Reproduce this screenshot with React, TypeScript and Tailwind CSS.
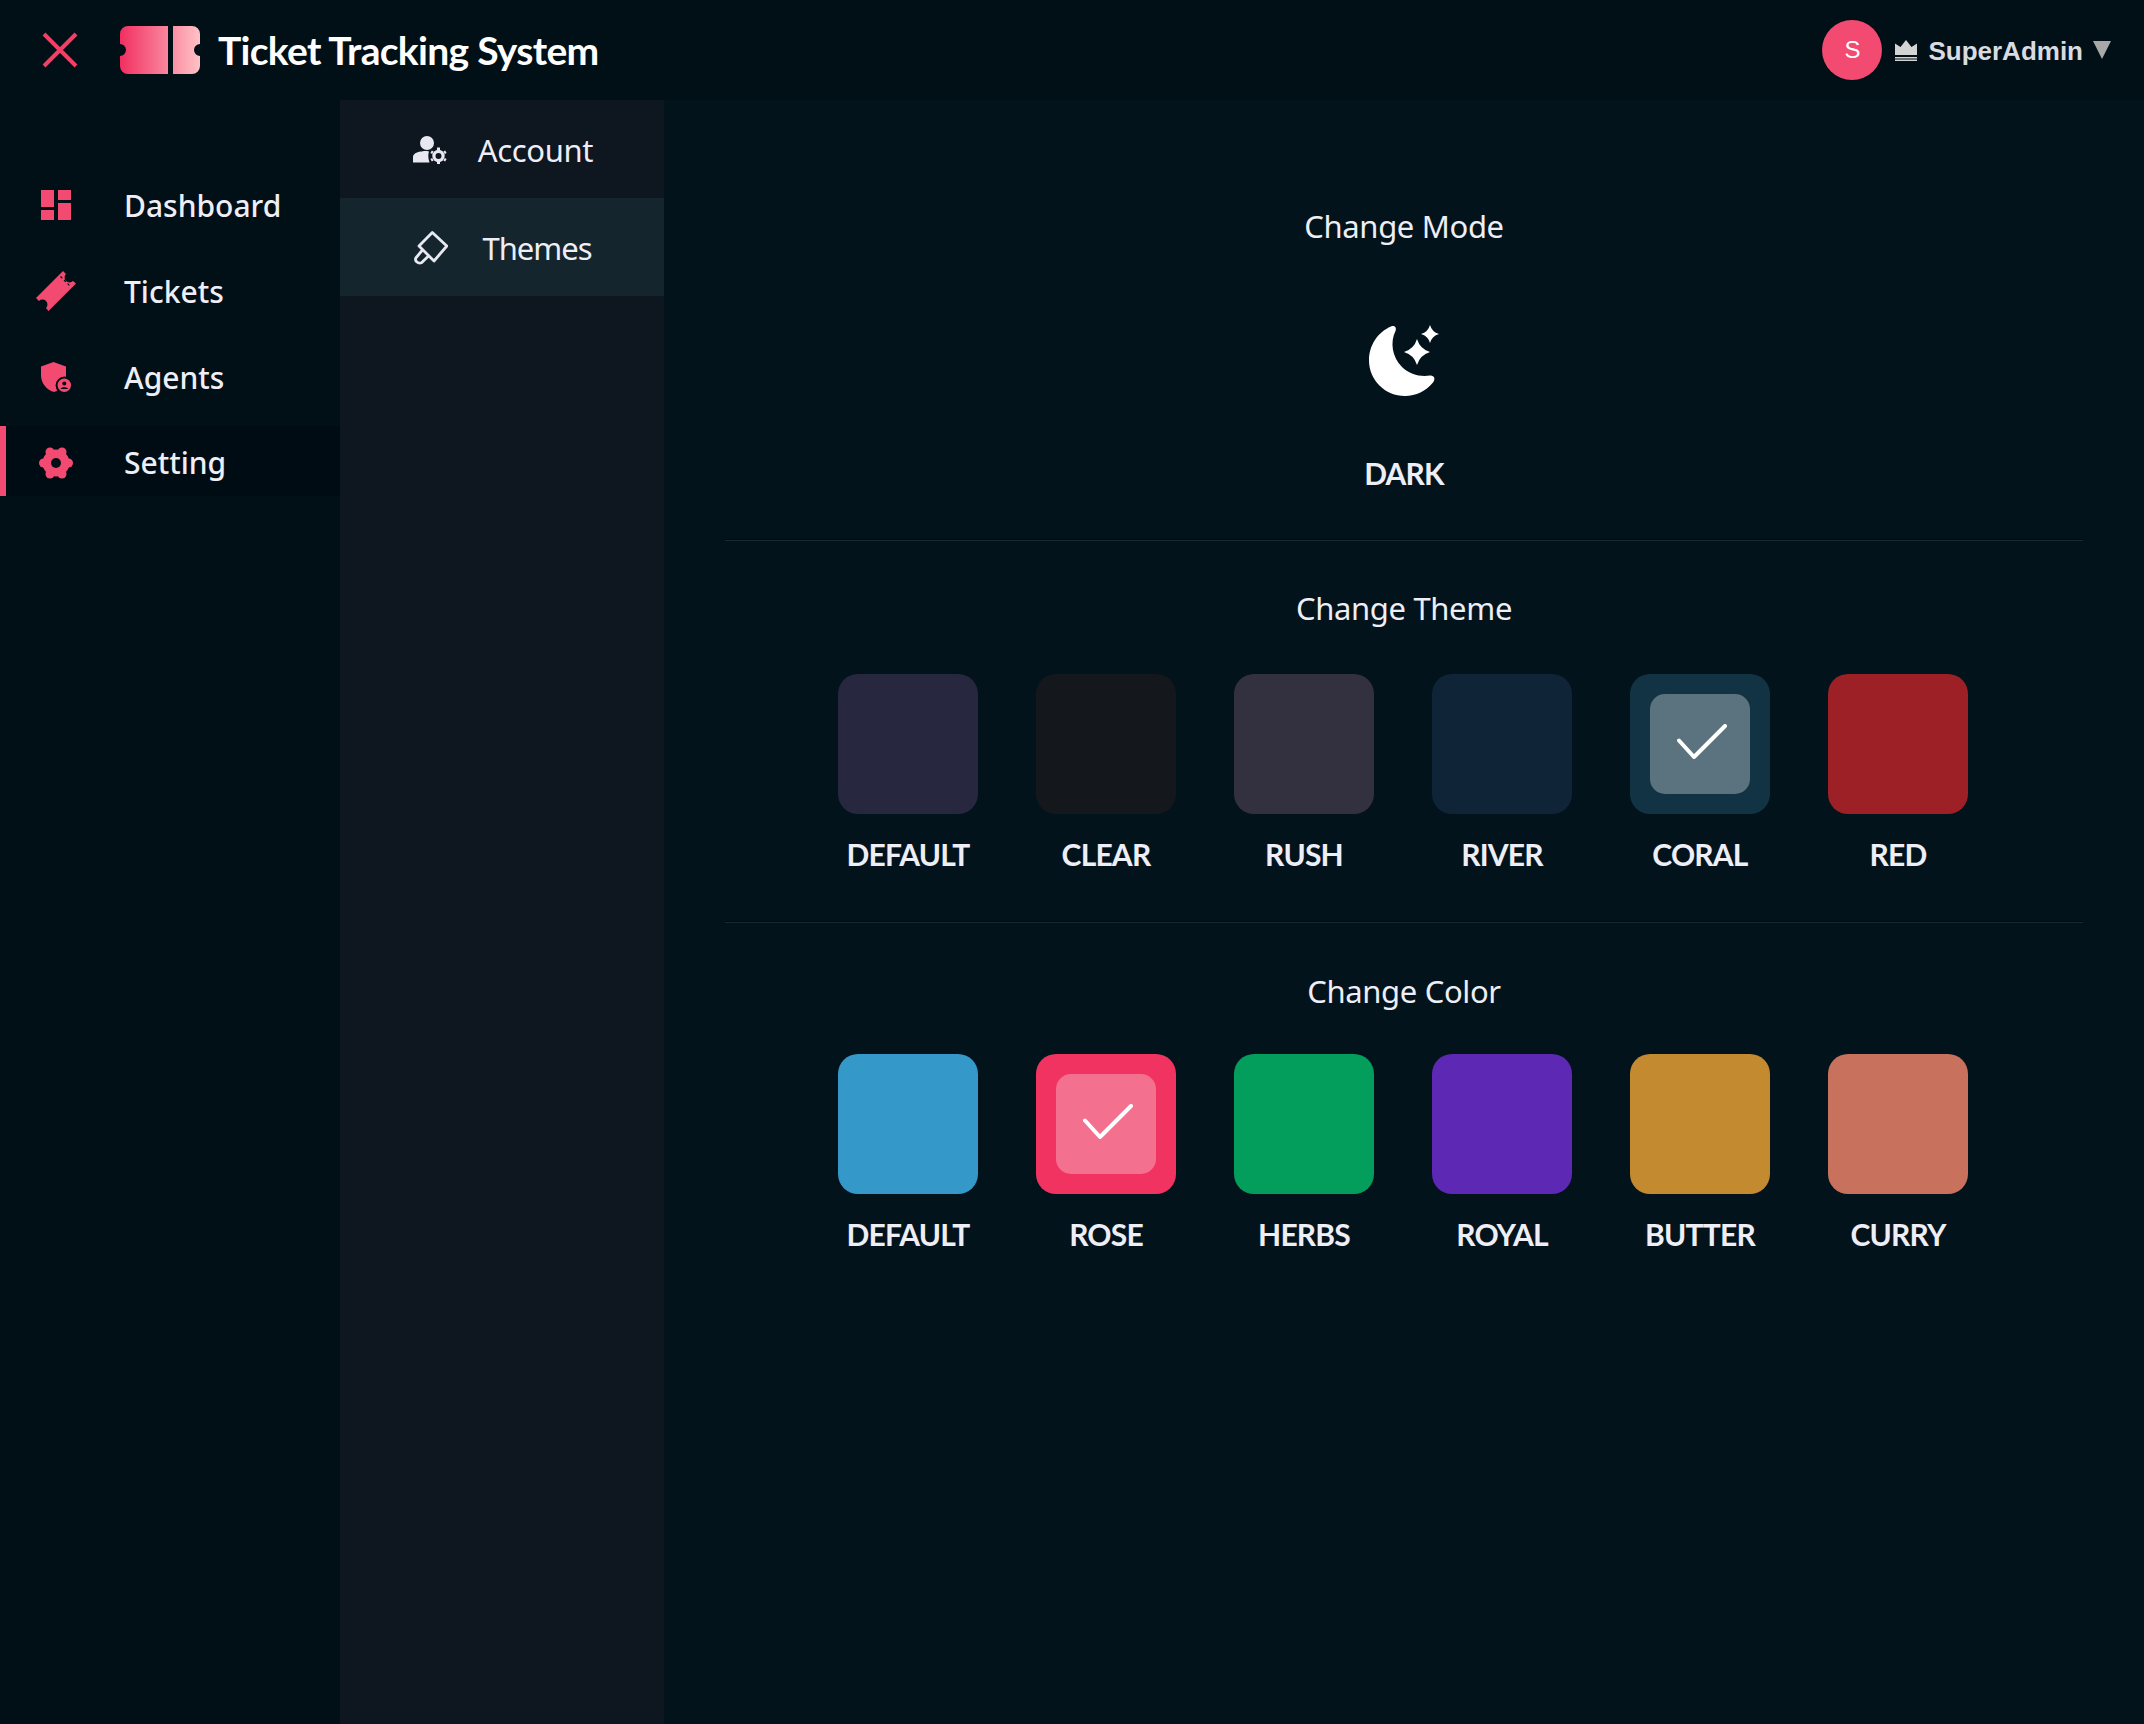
import { ReactNode } from 'react'

const PINK = '#f34a72'

const DashboardIcon = () => (
  <svg width="30" height="30" viewBox="0 0 30 30" fill={PINK}>
    <rect x="0" y="0" width="13" height="17" />
    <rect x="17" y="0" width="13" height="10" />
    <rect x="17" y="13" width="13" height="17" />
    <rect x="0" y="20" width="13" height="10" />
  </svg>
)

const TicketIcon = () => (
  <svg width="40" height="40" viewBox="0 0 40 40" fill={PINK}>
    <path d="M27 0 L30 3 A3.5 3.5 0 0 0 37 10 L40 12.5 L12.5 40 L10 37 A3.5 3.5 0 0 0 3 30 L0 27 Z" />
    <path d="M24.5 5.5 L34.5 15.5" stroke="#010f17" strokeWidth="1.2" strokeDasharray="2.5 2.5" fill="none" />
  </svg>
)

const AgentIcon = () => (
  <svg width="30" height="30" viewBox="0 0 30 30" fill={PINK}>
    <path d="M12.5 0 L25 4.5 V14 C25 22 20 27.5 13 30 C5 27.5 0 21 0 13 V4.5 Z" />
    <circle cx="23.3" cy="23.3" r="8.7" fill="#010f17" />
    <circle cx="23.3" cy="23.3" r="6.7" />
    <circle cx="23.3" cy="21.5" r="2" fill="#010f17" />
    <path d="M19.5 27 C20 24.6 26.6 24.6 27.1 27 Z" fill="#010f17" />
  </svg>
)

const GearIcon = () => (
  <svg width="34" height="32" viewBox="0 0 34 32" fill={PINK}>
    <circle cx="17" cy="16" r="13.5" />
    <circle cx="4.5" cy="16" r="4.5" />
    <circle cx="29.5" cy="16" r="4.5" />
    <circle cx="11" cy="5" r="4.5" />
    <circle cx="23" cy="5" r="4.5" />
    <circle cx="11" cy="27" r="4.5" />
    <circle cx="23" cy="27" r="4.5" />
    <circle cx="17" cy="16" r="5" fill="#010f17" />
  </svg>
)

const UserGearIcon = () => (
  <svg width="34" height="28" viewBox="0 0 34 28" fill="#e8e8f0">
    <circle cx="14" cy="7" r="7" />
    <path d="M0 26.5 V21 C0 17 6 15 14 15 L16 15.5 C15 18 15 22 16.5 26.5 Z" />
    <circle cx="25.5" cy="20" r="4.6" fill="none" stroke="#e8e8f0" strokeWidth="3.2" />
    <path d="M25.5 11.5 V14 M25.5 26 V28.5 M31.1 16.75 L32.9 15.75 M31.1 23.25 L32.9 24.25 M19.9 16.75 L18.1 15.75 M19.9 23.25 L18.1 24.25" stroke="#e8e8f0" strokeWidth="3" fill="none" />
  </svg>
)

const BrushIcon = () => (
  <svg width="34" height="34" viewBox="0 0 34 34" fill="none" stroke="#e8e8f0" strokeWidth="2.8" strokeLinejoin="round" strokeLinecap="round">
    <path d="M18.3 1.5 L32.8 15 L20 30 L5 15 Z" />
    <path d="M8.5 19 L1.8 27 C0.5 30 4 33 7.5 31.8 L14.5 25" />
  </svg>
)

const MoonIcon = () => (
  <svg width="70" height="71" viewBox="0 0 70 71" fill="#ffffff">
    <path d="M22 1.5 C25 0 28 2 26.5 6 C21 17 23 32 33 42 C41 49.5 51 52 61 50.5 C65 50 67 54 64 57.5 C57 66 47 71 36 71 C16 71 0 55 0 35.5 C0 20 9 7 22 1.5 Z" />
    <path d="M48 14 Q51 24 61 27 Q51 30 48 40 Q45 30 35 27 Q45 24 48 14 Z" />
    <path d="M61 0 Q63 7 70 9 Q63 11 61 18 Q59 11 52 9 Q59 7 61 0 Z" />
  </svg>
)

const Check = () => (
  <svg className="mb-[6px] ml-[4px]" width="50" height="35" viewBox="0 0 50 35" fill="none" stroke="#ffffff" strokeWidth="4" strokeLinecap="round" strokeLinejoin="round">
    <path d="M2 16.5 L17 33 L48 2" />
  </svg>
)

const Crown = () => (
  <svg width="22" height="21" viewBox="0 0 22 21" fill="#d4d4d4">
    <path d="M0 3.5 L5.5 7 L11 0 L16.5 7 L22 3.5 V15 H0 Z" />
    <rect x="0" y="17" width="22" height="1.5" />
    <rect x="0" y="19.5" width="22" height="1.5" />
  </svg>
)

const Logo = () => (
  <svg width="80" height="48" viewBox="0 0 80 48">
    <defs>
      <linearGradient id="logoGrad" x1="0" y1="0" x2="1" y2="0">
        <stop offset="0" stopColor="#f12f60" />
        <stop offset="1" stopColor="#ffc2c6" />
      </linearGradient>
    </defs>
    <path
      fill="url(#logoGrad)"
      d="M8 0 H48 V48 H8 A8 8 0 0 1 0 40 V30 A6 6 0 0 0 0 18 V8 A8 8 0 0 1 8 0 Z M53 0 H72 A8 8 0 0 1 80 8 V18 A6 6 0 0 0 80 30 V40 A8 8 0 0 1 72 48 H53 Z"
    />
  </svg>
)

const navItems: { label: string; icon: ReactNode; active?: boolean }[] = [
  { label: 'Dashboard', icon: <DashboardIcon /> },
  { label: 'Tickets', icon: <TicketIcon /> },
  { label: 'Agents', icon: <AgentIcon /> },
  { label: 'Setting', icon: <GearIcon />, active: true }
]

const themes = [
  { name: 'DEFAULT', bg: 'bg-[#27273f]' },
  { name: 'CLEAR', bg: 'bg-[#14171c]' },
  { name: 'RUSH', bg: 'bg-[#33303f]' },
  { name: 'RIVER', bg: 'bg-[#102438]' },
  { name: 'CORAL', bg: 'bg-[#123344]', inner: 'bg-[#5a737e]' },
  { name: 'RED', bg: 'bg-[#9c2026]' }
]

const colors = [
  { name: 'DEFAULT', bg: 'bg-[#3498c9]' },
  { name: 'ROSE', bg: 'bg-[#f13362]', inner: 'bg-[#f4708f]' },
  { name: 'HERBS', bg: 'bg-[#049e5c]' },
  { name: 'ROYAL', bg: 'bg-[#5c28b4]' },
  { name: 'BUTTER', bg: 'bg-[#c48a30]' },
  { name: 'CURRY', bg: 'bg-[#c8725e]' }
]

const labelClass = "font-['Lato',sans-serif] text-[30px] leading-[46px] font-bold tracking-[-0.8px] text-[#eeeef6]"
const headingClass = 'text-center text-[31px] leading-[46px] tracking-[-0.35px]'

const Swatches = ({ items }: { items: { name: string; bg: string; inner?: string }[] }) => (
  <div className="flex justify-center gap-[58px] pr-[2px]">
    {items.map((item) => (
      <div key={item.name} className="flex w-[140px] flex-col items-center">
        <div className={`flex h-[140px] w-[140px] items-center justify-center rounded-[20px] ${item.bg}`}>
          {item.inner && (
            <div className={`flex h-[100px] w-[100px] items-center justify-center rounded-[15px] ${item.inner}`}>
              <Check />
            </div>
          )}
        </div>
        <span className={`mt-[17px] ${labelClass}`}>{item.name}</span>
      </div>
    ))}
  </div>
)

export default function App() {
  return (
    <div className="flex h-[1724px] w-[2144px] flex-col bg-[#010f17] font-['Noto_Sans',sans-serif] text-[#eeeef6]">
      <header className="flex h-[100px] shrink-0 items-center justify-between pr-[33px]">
        <div className="flex items-center">
          <svg className="ml-[42px]" width="36" height="36" viewBox="0 0 36 36" stroke="#f33e66" strokeWidth="4">
            <path d="M2 2 L34 34 M34 2 L2 34" />
          </svg>
          <div className="ml-[42px]">
            <Logo />
          </div>
          <h1 className="ml-[18px] font-['Lato',sans-serif] text-[39px] font-bold tracking-[-0.7px] text-white">
            Ticket Tracking System
          </h1>
        </div>
        <div className="flex items-center">
          <div className="flex h-[60px] w-[60px] items-center justify-center rounded-full bg-[#f34a72] font-['Liberation_Sans',sans-serif] text-[24px] text-white">
            S
          </div>
          <div className="ml-[13px]">
            <Crown />
          </div>
          <span className="ml-[11px] pt-[2px] font-['Liberation_Sans',sans-serif] text-[26px] font-bold text-[#d8dce0]">
            SuperAdmin
          </span>
          <svg className="ml-[10px]" width="18" height="18" viewBox="0 0 18 18" fill="#a8a8a8">
            <path d="M0 0 H18 L9 18 Z" />
          </svg>
        </div>
      </header>

      <div className="flex min-h-0 flex-1">
        <nav className="w-[340px] shrink-0 pt-[62px]">
          {navItems.map((item) => (
            <div
              key={item.label}
              className={`flex items-center ${item.active ? 'mt-[6px] h-[70px] border-l-[6px] border-[#f34a72] bg-[#000c13] pt-[3px] pl-[50px]' : 'h-[86px] pl-[56px]'}`}>
              <div className="flex w-0 justify-center overflow-visible">
                <div className="shrink-0">{item.icon}</div>
              </div>
              <span className="ml-[68px] text-[30px] font-medium text-[#eeeef6]">{item.label}</span>
            </div>
          ))}
        </nav>

        <aside className="w-[324px] shrink-0 bg-[#0e1620]">
          <div className="flex h-[98px] items-center justify-center gap-[31px] pt-[2px] pl-[2px]">
            <UserGearIcon />
            <span className="text-[31px] tracking-[-0.35px]">Account</span>
          </div>
          <div className="flex h-[98px] items-center justify-center gap-[34px] bg-[#14252d] pt-[2px] pl-[2px]">
            <BrushIcon />
            <span className="text-[31px] tracking-[-1px]">Themes</span>
          </div>
        </aside>

        <main className="flex-1 bg-[#03131b] px-[61px]">
          <section className="flex h-[440px] flex-col items-center border-b border-[#000a10] pt-[103px] shadow-[0_1px_0_#152a33]">
            <h2 className={headingClass}>Change Mode</h2>
            <div className="mt-[76px]">
              <MoonIcon />
            </div>
            <span className={`mt-[54px] ${labelClass}`}>DARK</span>
          </section>
          <section className="h-[382px] border-b border-[#000a10] pt-[45px] shadow-[0_1px_0_#152a33]">
            <h2 className={headingClass}>Change Theme</h2>
            <div className="mt-[43px]">
              <Swatches items={themes} />
            </div>
          </section>
          <section className="pt-[46px]">
            <h2 className={headingClass}>Change Color</h2>
            <div className="mt-[40px]">
              <Swatches items={colors} />
            </div>
          </section>
        </main>
      </div>
    </div>
  )
}
